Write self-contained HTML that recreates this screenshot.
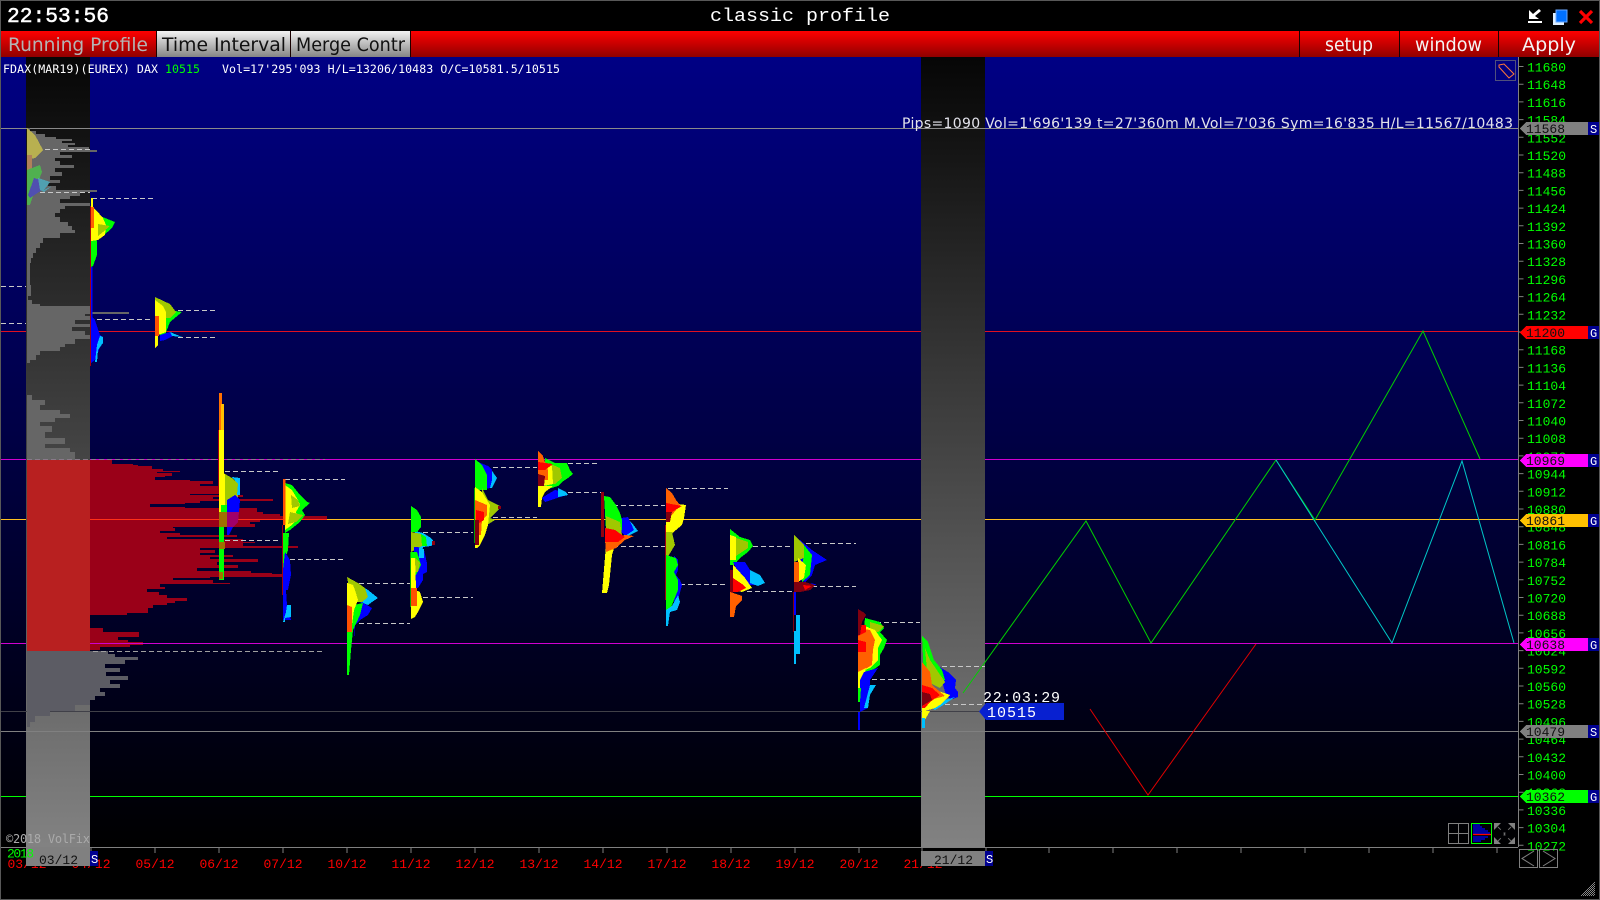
<!DOCTYPE html>
<html><head><meta charset="utf-8"><title>classic profile</title>
<style>html,body{margin:0;padding:0;background:#000;width:1600px;height:900px;overflow:hidden}svg{display:block}
.m{font-family:"Liberation Mono",monospace}
.d{font-family:"DejaVu Sans Mono","Liberation Mono",monospace}
.s{font-family:"DejaVu Sans","Liberation Sans",sans-serif}
.ax text{font-family:"Liberation Mono",monospace;font-size:13px;fill:#00ff00}
.tm text{font-family:"Liberation Mono",monospace;font-size:13px;fill:#ff0000;text-anchor:middle}
.tab{font-family:"DejaVu Sans","Liberation Sans",sans-serif;font-size:19px}
.p polygon{shape-rendering:crispEdges}
.dash path{stroke:#c8c8c8;stroke-dasharray:5 3;fill:none;stroke-width:1;shape-rendering:crispEdges}
</style></head><body>
<svg width="1600" height="900" viewBox="0 0 1600 900" xmlns="http://www.w3.org/2000/svg">
<defs>
<linearGradient id="bg" x1="0" y1="0" x2="0" y2="1"><stop offset="0" stop-color="#000084"/><stop offset="1" stop-color="#000000"/></linearGradient>
<linearGradient id="col" x1="0" y1="0" x2="0" y2="1"><stop offset="0" stop-color="#060606"/><stop offset="1" stop-color="#828282"/></linearGradient>
<linearGradient id="red" x1="0" y1="0" x2="0" y2="1"><stop offset="0" stop-color="#ff0000"/><stop offset="1" stop-color="#900000"/></linearGradient>
<linearGradient id="tabg" x1="0" y1="0" x2="0" y2="1"><stop offset="0" stop-color="#f2f2f2"/><stop offset="1" stop-color="#858585"/></linearGradient>
<pattern id="ck" width="2" height="2" patternUnits="userSpaceOnUse"><rect width="1" height="1" fill="#888"/><rect x="1" y="1" width="1" height="1" fill="#888"/></pattern>
</defs>
<rect width="1600" height="900" fill="#000"/>
<!-- chart background -->
<rect x="1" y="57" width="1517" height="790" fill="url(#bg)"/>

<!-- horizontal levels -->
<g shape-rendering="crispEdges">
<rect x="1" y="331" width="1517" height="1" fill="#e01020"/>
<rect x="1" y="459" width="1517" height="1" fill="#d000d0"/>
<rect x="1" y="519" width="1517" height="1" fill="#ffc020"/>
<rect x="1" y="643" width="1517" height="1" fill="#d000d0"/>
<rect x="1" y="796" width="1517" height="1" fill="#00ff00"/>
</g>

<!-- day columns -->
<rect x="26" y="57" width="64" height="790" fill="url(#col)"/>
<rect x="921" y="57" width="64" height="790" fill="url(#col)"/>
<rect x="1" y="128" width="1517" height="1" fill="#8a8a8a"/>
<rect x="1" y="711" width="978" height="1" fill="#404048"/>
<rect x="1" y="731" width="1517" height="1" fill="#808080"/>

<!-- composite profile -->
<path fill="#666" shape-rendering="crispEdges" d="M27 128H30V131H36V134H45V137H56V139H72V141H62V143H75V145H68V147H89V150H97V152H60V155H72V158H55V161H60V165H74V168H55V172H62V176H50V180H60V183H48V186H56V190H97V192H80V196H70V199H60V203H90V206H65V209H60V213H55V217H60V222H68V226H72V230H75V233H60V238H43V243H40V248H36V253H33V258H31V263H30V285H31V296H28V300H32V304H40V306H90V312H129V314H85V316H90V320H75V324H90V327H72V331H85V335H90V337H97V339H75V344H65V347H60V351H40V355H36V360H30V363H27V395H32V400H45V405H40V410H60V414H70V418H55V422H40V426H52V432H45V438H65V444H45V448H70V452H75V460H27Z"/>
<rect x="27" y="460" width="63" height="191" fill="#b82020" shape-rendering="crispEdges"/>
<path fill="#9a0018" shape-rendering="crispEdges" d="M90 460H112V464H133V465H138V466H152V469H163V471H180V472H157V473H172V476H165V477H155V480H190V481H213V484H200V486H230V490H222V492H238V494H190V495H243V497H213V499H273V501H200V503H185V504H150V507H185V508H257V512H263V514H280V516H327V520H260V522H250V524H255V527H173V528H175V531H160V533H180V535H237V537H167V539H243V542H255V543H243V546H298V548H200V550H215V553H200V555H233V557H210V559H258V562H217V565H238V568H197V571H251V573H272V574H289V577H210V578H173V580H213V583H230V584H160V587H165V589H147V592H159V595H167V598H187V601H175V603H167V605H153V608H148V613H127V615H90V628H103V632H139V637H118V640H128V642H143V645H130V647H100V650H90Z"/>
<path fill="#ff3018" d="M90 519H327V520H90Z" shape-rendering="crispEdges"/>
<path fill="#d000d0" d="M90 643H143V644H90Z" shape-rendering="crispEdges"/>
<path fill="#5c5c64" shape-rendering="crispEdges" d="M27 651H108V654H115V657H138V660H125V664H105V668H120V672H106V676H128V680H110V684H120V688H100V692H105V696H95V700H90V705H75V711H50V716H35V722H30V727H27Z"/>

<!-- trend lines -->
<g fill="none" stroke-width="1">
<polyline stroke="#00d000" points="963,693 1086,521 1151,643 1276,460 1315,520 1423,331 1480,459"/>
<polyline stroke="#00c8c8" points="1276,460 1392,643 1462,461 1514,643"/>
<polyline stroke="#e00000" points="1090,709 1148,795 1256,644"/>
</g>

<!-- dashed value lines -->
<path d="M27 459.5H325" stroke="#8a7a8a" stroke-dasharray="5 3" fill="none" shape-rendering="crispEdges"/>
<g class="dash">
<path d="M45 149.5H90M40 192.5H90M92 198.5H153M1 286.5H26M1 323.5H26M97 319.5H152M178 310.5H217M178 337.5H217"/>
<path d="M225 471.5H281M285 479.5H345M225 540.5H281M290 559.5H345M359 583.5H410M359 623.5H410"/>
<path d="M423 532.5H473M423 597.5H473M493 467.5H537M493 517.5H537M568 463.5H600M568 492.5H602M613 505.5H665M613 546.5H665M668 488.5H728M680 584.5H728"/>
<path d="M753 546.5H792M747 591.5H792M806 543.5H856M812 586.5H856M876 622.5H920M872 679.5H920M942 666.5H985M945 704.5H985"/>
</g>
<path d="M93 651.5H325" stroke="#a0a0a0" stroke-dasharray="5 3" fill="none" shape-rendering="crispEdges"/>

<!-- day profiles -->
<g class="p">
<!-- 03/12 muted -->
<polygon fill="#b8b050" points="27,128 35,135 43,150 35,158 27,160"/>
<polygon fill="#b0805a" points="27,155 32,155 32,168 27,170"/>
<polygon fill="#50b050" points="27,170 40,165 42,172 35,190 30,205 27,205"/>
<polygon fill="#5050b0" points="34,178 40,180 42,190 30,198 28,195"/>
<polygon fill="#50a0b0" points="38,178 50,182 44,190 52,186 44,192 40,190"/>
<!-- 04/12 -->
<rect x="91" y="198" width="2" height="9" fill="#ff0"/>
<polygon fill="#0f0" points="100,216 115,222 112,228 103,236 96,241 91,241 91,240 100,230"/>
<polygon fill="#ff0" points="91,206 96,210 103,218 106,225 105,235 98,240 91,241"/>
<polygon fill="#a0c800" points="98,224 110,226 103,232 98,236"/>
<polygon fill="#ff6000" points="91,207 94,207 94,228 91,228"/>
<polygon fill="#0f0" points="91,241 97,241 97,255 93,266 91,267"/>
<rect x="91" y="267" width="1.5" height="55" fill="#0000ff"/>
<polygon fill="#0000ff" points="92,317 95,320 100,335 103,337 99,350 95,360 91,363 91,317"/>
<polygon fill="#00c0ff" points="100,336 103,337 103,343 98,350 97,362 95,362 97,345"/>
<rect x="90" y="206" width="1" height="160" fill="#a00010"/>
<!-- 05/12 -->
<polygon fill="#0f0" points="168,310 182,312 170,322 165,335 160,338 160,320"/>
<polygon fill="#a0c800" points="155,297 170,304 176,312 170,318 160,318 155,305"/>
<polygon fill="#ff0" points="155,300 163,306 166,312 166,332 158,335 158,345 155,348"/>
<polygon fill="#ff5000" points="155,316 159,316 159,336 155,336"/>
<polygon fill="#0000ff" points="160,335 170,332 175,335 165,340 160,341"/>
<polygon fill="#00c0ff" points="170,332 182,337 172,336"/>
<!-- 06/12 -->
<rect x="219" y="393" width="3" height="41" fill="#ff7000"/>
<rect x="219" y="430" width="5" height="45" fill="#ff0"/>
<rect x="221" y="404" width="3" height="26" fill="#ffc000"/>
<rect x="218" y="430" width="1" height="60" fill="#a00010"/>
<polygon fill="#ff0" points="219,470 225,474 225,512 219,512"/>
<polygon fill="#a0c800" points="225,474 232,478 238,484 238,500 228,508 225,508"/>
<polygon fill="#00c0ff" points="232,477 240,478 240,495 237,495 238,484"/>
<polygon fill="#0000ff" points="227,500 235,495 240,500 239,512 227,512"/>
<polygon fill="#0f0" points="221,505 227,505 227,512 221,512"/>
<rect x="219" y="512" width="8" height="15" fill="#a07000"/>
<polygon fill="#a0006a" points="227,512 239,512 238,522 233,527 227,527"/>
<polygon fill="#0000ff" points="227,527 233,527 229,535 227,535"/>
<rect x="219" y="527" width="5" height="53" fill="#0f0"/>
<rect x="219" y="542" width="6" height="7" fill="#a07000"/>
<rect x="219" y="572" width="4" height="7" fill="#a07000"/>
<!-- 07/12 -->
<polygon fill="#0f0" points="285,483 292,485 300,495 307,502 310,503 302,510 305,515 300,522 290,530 285,533"/>
<polygon fill="#ff0" points="285,485 292,490 298,500 300,505 296,512 298,518 292,525 285,530"/>
<polygon fill="#a0c800" points="291,495 298,500 300,506 292,508"/>
<polygon fill="#a0c800" points="290,512 303,515 296,522 288,524"/>
<rect x="283" y="479" width="2.5" height="46" fill="#ff5000"/>
<polygon fill="#0f0" points="283,533 289,533 288,550 285,560 285,575 283,580"/>
<polygon fill="#0000ff" points="285,552 290,560 291,575 288,590 286,590 287,605 291,620 283,620 283,570"/>
<polygon fill="#00c0ff" points="287,605 291,605 291,617 285,618 285,622 283,622 286,612"/>
<rect x="282" y="525" width="1" height="70" fill="#a00010"/>
<!-- 10/12 -->
<polygon fill="#00c0ff" points="360,585 368,590 378,598 372,602 368,605 360,602"/>
<polygon fill="#0000ff" points="362,602 372,608 368,615 360,620 355,625 354,640 354,610"/>
<polygon fill="#0f0" points="354,605 363,603 360,615 353,630 351,650 349,675 347,675 347,625"/>
<polygon fill="#a0c800" points="347,577 358,583 365,588 368,597 362,602 352,602"/>
<polygon fill="#ff0" points="347,583 353,585 355,590 358,600 354,610 352,625 347,625"/>
<polygon fill="#ff5000" points="347,605 352,607 352,632 347,632"/>
<!-- 11/12 -->
<polygon fill="#00c0ff" points="415,531 423,533 431,538 435,543 431,546 423,547 421,556 415,556"/>
<rect x="432" y="541" width="3" height="4" fill="#900010"/>
<polygon fill="#0f0" points="421,534 426,537 427,546 421,546"/>
<polygon fill="#a0c800" points="411,532 421,534 422,546 411,552"/>
<polygon fill="#0f0" points="411,506 414,508 417,510 421,517 421,527 417,532 411,532"/>
<polygon fill="#0000ff" points="414,547 418,547 424,550 427,563 427,572 423,574 423,580 418,588 414,588"/>
<polygon fill="#00c0ff" points="419,548 424,549 424,558 419,558"/>
<polygon fill="#0f0" points="411,552 417,552 421,565 416,575 411,575"/>
<polygon fill="#a0c800" points="415,558 420,563 418,572 415,572"/>
<polygon fill="#ff0" points="411,558 415,558 416,588 411,588"/>
<polygon fill="#ff0" points="411,588 420,592 423,602 418,612 415,617 411,619"/>
<polygon fill="#ff5000" points="411,588 417,588 417,606 411,606"/>
<rect x="410" y="552" width="1" height="55" fill="#00a000"/>
<!-- 12/12 -->
<polygon fill="#00c0ff" points="490,468 497,478 492,488 488,488"/>
<polygon fill="#0000ff" points="478,462 488,466 492,470 492,480 490,488 482,490"/>
<polygon fill="#0f0" points="475,459 482,465 487,475 487,490 475,490"/>
<polygon fill="#a0c800" points="482,488 488,500 500,506 500,508 490,518 495,520 487,525 483,532"/>
<polygon fill="#ff0" points="475,487 482,492 490,505 488,525 485,535 480,545 477,548 475,548"/>
<polygon fill="#ff6000" points="475,500 487,505 487,515 482,520 481,535 475,535"/>
<polygon fill="#ff0000" points="476,510 484,512 484,520 476,525"/>
<polygon fill="#800010" points="475,520 479,520 479,545 475,545"/>
<rect x="498" y="506" width="3" height="3" fill="#900010"/>
<rect x="474" y="488" width="1" height="55" fill="#00a000"/>
<!-- 13/12 -->
<polygon fill="#0f0" points="545,458 555,463 567,463 570,470 573,474 568,478 562,482 558,486 545,490"/>
<polygon fill="#a0c800" points="548,463 560,468 562,478 555,484 548,484"/>
<polygon fill="#ff0" points="543,462 552,466 553,484 543,486"/>
<polygon fill="#ff6000" points="538,451 543,456 545,462 548,470 548,480 538,480"/>
<polygon fill="#ff0000" points="538,462 553,464 545,470 538,470"/>
<polygon fill="#800010" points="538,474 545,476 544,486 538,486"/>
<polygon fill="#0000ff" points="542,498 548,494 555,490 566,492 568,495 560,497 545,502"/>
<polygon fill="#00c0ff" points="558,488 566,492 568,495 558,497"/>
<polygon fill="#ff0" points="538,486 553,486 545,492 542,498 541,507 538,507"/>
<!-- 14/12 -->
<rect x="601" y="492" width="3" height="45" fill="#900010"/>
<polygon fill="#00c0ff" points="628,520 632,523 638,531 632,534 624,538"/>
<polygon fill="#0000ff" points="621,518 628,517 634,530 625,536 621,532"/>
<polygon fill="#0f0" points="604,496 610,497 616,505 620,513 622,520 622,530 606,530"/>
<polygon fill="#a0c800" points="606,516 620,522 622,535 606,540"/>
<polygon fill="#ff0" points="606,545 615,545 612,555 610,575 609,585 607,593 602,593"/>
<polygon fill="#ff6000" points="605,540 625,535 634,536 625,540 616,548 606,552"/>
<polygon fill="#f00" points="605,528 615,530 625,537 618,542 605,542"/>
<!-- 17/12 -->
<polygon fill="#ff0" points="670,503 686,505 684,518 682,525 670,535 666,535 666,518"/>
<polygon fill="#ff6000" points="666,488 672,493 676,500 680,505 672,515 666,515"/>
<polygon fill="#f00" points="666,503 682,506 672,512 666,512"/>
<polygon fill="#800010" points="666,512 672,512 670,522 666,522"/>
<polygon fill="#a0c800" points="666,532 672,532 675,545 666,560"/>
<polygon fill="#0000ff" points="674,556 678,560 678,570 676,575 680,580 682,585 678,600 674,610"/>
<polygon fill="#0f0" points="666,555 676,558 678,565 674,572 678,580 678,590 670,610 666,610"/>
<polygon fill="#00c0ff" points="678,595 680,602 677,610 670,612 668,626 666,626 666,610 672,606"/>
<rect x="665" y="525" width="1" height="75" fill="#a00010"/>
<!-- 18/12 -->
<polygon fill="#0f0" points="730,529 740,537 750,540 753,546 748,552 740,558 734,565 730,565"/>
<polygon fill="#a0c800" points="736,538 748,542 748,548 736,556"/>
<polygon fill="#ff0" points="730,535 736,537 736,560 730,560"/>
<polygon fill="#0000ff" points="733,562 745,562 750,570 760,577 755,585 745,585"/>
<polygon fill="#00c0ff" points="750,570 760,575 765,583 758,586 750,583"/>
<polygon fill="#ff0" points="733,565 736,568 745,578 752,588 742,592 733,590"/>
<polygon fill="#f00" points="733,578 742,584 746,588 738,592 733,592"/>
<polygon fill="#800010" points="730,570 733,570 733,595 730,595"/>
<polygon fill="#ff6000" points="730,592 742,596 742,600 736,606 734,617 730,617"/>
<!-- 19/12 -->
<polygon fill="#0000ff" points="800,540 812,550 827,560 815,565 812,575 805,582 800,580"/>
<polygon fill="#0f0" points="804,545 812,555 810,575 802,582"/>
<polygon fill="#a0c800" points="794,535 804,545 804,558 794,562"/>
<polygon fill="#ff0" points="798,558 806,565 804,578 798,582"/>
<polygon fill="#ff6000" points="794,562 799,562 799,582 794,582"/>
<polygon fill="#0000ff" points="805,583 816,584 810,590 805,590"/>
<polygon fill="#800010" points="794,582 805,582 815,585 810,590 800,592 794,592"/>
<polygon fill="#f00" points="803,585 812,586 805,590"/>
<rect x="794" y="592" width="2" height="23" fill="#0000ff"/>
<polygon fill="#00c0ff" points="796,615 800,615 800,631 796,631"/>
<polygon fill="#00c0ff" points="794,631 800,631 800,654 796,654 796,664 794,664"/>
<rect x="793" y="592" width="1" height="40" fill="#800010"/>
<!-- 20/12 -->
<polygon fill="#0f0" points="865,618 880,622 884,628 880,632 887,640 884,648 880,655 880,665 870,672 860,672"/>
<polygon fill="#a0c800" points="870,622 884,626 878,632 870,632"/>
<polygon fill="#ff0" points="862,625 875,630 882,640 878,648 878,660 870,668 860,672"/>
<polygon fill="#ff6000" points="858,628 870,630 875,640 873,650 872,665 860,672 858,672"/>
<polygon fill="#f00" points="858,640 866,642 866,652 858,652"/>
<polygon fill="#f00" points="860,625 866,625 866,632 858,636"/>
<polygon fill="#800010" points="858,609 863,612 866,615 862,622 860,635 858,635"/>
<polygon fill="#ff0" points="858,672 866,668 864,680 862,688 858,690"/>
<polygon fill="#0000ff" points="864,672 878,668 870,680 870,695 868,708 860,712 860,680"/>
<polygon fill="#00c0ff" points="870,685 876,685 870,695 868,708 864,708"/>
<polygon fill="#0f0" points="858,688 861,688 860,702 858,702"/>
<rect x="858" y="712" width="2" height="18" fill="#0000ff"/>
<!-- 21/12 -->
<polygon fill="#0000ff" points="938,666 948,672 956,680 955,688 958,692 958,697 950,700 945,692"/>
<polygon fill="#0f0" points="922,636 928,642 934,660 942,670 945,680 940,682 924,680"/>
<polygon fill="#a0c800" points="925,648 930,660 945,682 940,688 928,682"/>
<polygon fill="#00c0ff" points="945,700 955,697 945,704 935,710 932,708"/>
<polygon fill="#ff0" points="924,685 935,690 950,695 945,700 940,705 935,708 925,711 922,711"/>
<polygon fill="#ff6000" points="922,662 930,672 932,685 945,696 930,700 922,695"/>
<polygon fill="#f00" points="922,685 932,688 940,695 930,702 925,708 922,708"/>
<polygon fill="#800010" points="922,692 930,694 932,700 922,706"/>
<polygon fill="#ff0" points="922,711 930,711 926,718 924,720 922,720"/>
<polygon fill="#00c0ff" points="922,718 925,718 925,728 922,728"/>
</g>

<!-- top bar -->
<rect x="0" y="0" width="1600" height="31" fill="#000"/>
<text class="m" x="7" y="22" font-size="21" fill="#fff" stroke="#fff" stroke-width=".5" textLength="102" lengthAdjust="spacingAndGlyphs">22:53:56</text>
<text class="m" x="710" y="21" font-size="18" fill="#fff" textLength="180" lengthAdjust="spacingAndGlyphs">classic profile</text>
<!-- window icons -->
<polygon fill="#fff" points="1529,10 1533,14 1539,9 1541,11 1535,16 1539,19 1529,19"/>
<rect x="1528" y="21" width="14" height="2" fill="#fff"/>
<rect x="1553" y="13" width="11" height="12" fill="#dfefff"/>
<rect x="1556" y="10" width="11" height="12" fill="#0070ff" stroke="#6aa8ff" stroke-width="1"/>
<path d="M1580 11L1592 23M1592 11L1580 23" stroke="#ff0000" stroke-width="3.2" fill="none"/>

<!-- red toolbar -->
<rect x="0" y="31" width="1600" height="26" fill="url(#red)"/>
<rect x="157" y="31" width="133" height="26" fill="url(#tabg)"/>
<rect x="291" y="31" width="119" height="26" fill="url(#tabg)"/>
<g fill="#1a0000" shape-rendering="crispEdges">
<rect x="156" y="31" width="1" height="26"/><rect x="290" y="31" width="1" height="26"/><rect x="410" y="31" width="1" height="26"/>
<rect x="1299" y="31" width="1" height="26"/><rect x="1399" y="31" width="1" height="26"/><rect x="1498" y="31" width="1" height="26"/>
</g>
<text class="tab" x="8" y="51" fill="#b4b4b4" textLength="140" lengthAdjust="spacingAndGlyphs">Running Profile</text>
<text class="tab" x="162" y="51" fill="#111" textLength="124" lengthAdjust="spacingAndGlyphs">Time Interval</text>
<text class="tab" x="296" y="51" fill="#111" textLength="109" lengthAdjust="spacingAndGlyphs">Merge Contr</text>
<text class="tab" x="1325" y="51" fill="#f4f4f4" textLength="48" lengthAdjust="spacingAndGlyphs">setup</text>
<text class="tab" x="1415" y="51" fill="#f4f4f4" textLength="67" lengthAdjust="spacingAndGlyphs">window</text>
<text class="tab" x="1522" y="51" fill="#f4f4f4" textLength="54" lengthAdjust="spacingAndGlyphs">Apply</text>

<!-- info text -->
<text class="d" x="3" y="73" font-size="11.6" fill="#fff" textLength="155">FDAX(MAR19)(EUREX) DAX</text>
<text class="d" x="165" y="73" font-size="11.6" fill="#00ff00" textLength="35">10515</text>
<text class="d" x="222" y="73" font-size="11.6" fill="#fff" textLength="338">Vol=17'295'093 H/L=13206/10483 O/C=10581.5/10515</text>
<text class="s" x="902" y="128" font-size="14" fill="#e4e4ec" textLength="611">Pips=1090 Vol=1'696'139 t=27'360m M.Vol=7'036 Sym=16'835 H/L=11567/10483</text>

<!-- tag icon -->
<rect x="1495.5" y="60.5" width="20" height="20" fill="none" stroke="#50507c"/>
<path d="M1499 65L1504 64L1514 74L1509 78L1499 67Z" fill="none" stroke="#ff7838"/>

<!-- axis -->
<rect x="1518" y="57" width="1" height="790" fill="#808080"/>
<rect x="0" y="847" width="1518" height="1" fill="#808080"/>
<path d="M1521 66V847" stroke="#808080" stroke-width="5" stroke-dasharray="1 16.7" fill="none"/>
<g class="ax">
<text x="1527" y="71.5">11680</text><text x="1527" y="89.2">11648</text><text x="1527" y="106.9">11616</text><text x="1527" y="124.6">11584</text><text x="1527" y="142.3">11552</text><text x="1527" y="160">11520</text><text x="1527" y="177.7">11488</text><text x="1527" y="195.4">11456</text><text x="1527" y="213.1">11424</text><text x="1527" y="230.8">11392</text><text x="1527" y="248.5">11360</text><text x="1527" y="266.2">11328</text><text x="1527" y="283.9">11296</text><text x="1527" y="301.6">11264</text><text x="1527" y="319.3">11232</text><text x="1527" y="337">11200</text><text x="1527" y="354.7">11168</text><text x="1527" y="372.4">11136</text><text x="1527" y="390.1">11104</text><text x="1527" y="407.8">11072</text><text x="1527" y="425.5">11040</text><text x="1527" y="443.2">11008</text><text x="1527" y="460.9">10976</text><text x="1527" y="478.6">10944</text><text x="1527" y="496.3">10912</text><text x="1527" y="514">10880</text><text x="1527" y="531.7">10848</text><text x="1527" y="549.4">10816</text><text x="1527" y="567.1">10784</text><text x="1527" y="584.8">10752</text><text x="1527" y="602.5">10720</text><text x="1527" y="620.2">10688</text><text x="1527" y="637.9">10656</text><text x="1527" y="655.6">10624</text><text x="1527" y="673.3">10592</text><text x="1527" y="691">10560</text><text x="1527" y="708.7">10528</text><text x="1527" y="726.4">10496</text><text x="1527" y="744.1">10464</text><text x="1527" y="761.8">10432</text><text x="1527" y="779.5">10400</text><text x="1527" y="797.2">10368</text><text x="1527" y="814.9">10336</text><text x="1527" y="832.6">10304</text><text x="1527" y="850.3">10272</text>
</g>

<!-- price tags -->
<g shape-rendering="crispEdges">
<polygon fill="#808080" points="1520,128.5 1526,122 1588,122 1588,135 1526,135"/>
<polygon fill="#ff0000" points="1520,332.5 1526,326 1588,326 1588,339 1526,339"/>
<polygon fill="#ff00ff" points="1520,460.5 1526,454 1588,454 1588,467 1526,467"/>
<polygon fill="#ffc000" points="1520,520.5 1526,514 1588,514 1588,527 1526,527"/>
<polygon fill="#ff00ff" points="1520,644.5 1526,638 1588,638 1588,651 1526,651"/>
<polygon fill="#808080" points="1520,731.5 1526,725 1588,725 1588,738 1526,738"/>
<polygon fill="#00ff00" points="1520,796.5 1526,790 1588,790 1588,803 1526,803"/>
<rect x="1588" y="122" width="11" height="13" fill="#000090"/><rect x="1588" y="326" width="11" height="13" fill="#000090"/><rect x="1588" y="454" width="11" height="13" fill="#000090"/><rect x="1588" y="514" width="11" height="13" fill="#000090"/><rect x="1588" y="638" width="11" height="13" fill="#000090"/><rect x="1588" y="725" width="11" height="13" fill="#000090"/><rect x="1588" y="790" width="11" height="13" fill="#000090"/>
</g>
<g class="m" font-size="13" fill="#111">
<text x="1526" y="133">11568</text><text x="1526" y="337">11200</text><text x="1526" y="465">10969</text><text x="1526" y="525">10861</text><text x="1526" y="649">10638</text><text x="1526" y="736">10479</text><text x="1526" y="801">10362</text>
</g>
<g class="m" font-size="12" fill="#fff">
<text x="1590" y="133">S</text><text x="1590" y="337">G</text><text x="1590" y="465">G</text><text x="1590" y="525">G</text><text x="1590" y="649">G</text><text x="1590" y="736">S</text><text x="1590" y="801">G</text>
</g>

<!-- last price -->
<text class="m" x="983" y="702" font-size="15" fill="#fff" textLength="77">22:03:29</text>
<polygon fill="#0820d0" points="979,711.5 986,703 1064,703 1064,720 986,720"/>
<text class="m" x="987" y="717" font-size="15" fill="#fff" textLength="49">10515</text>

<!-- time axis -->
<path d="M91 847v6M155 847v6M219 847v6M283 847v6M347 847v6M411 847v6M475 847v6M539 847v6M603 847v6M667 847v6M731 847v6M795 847v6M859 847v6M922 847v6M986 847v6M1049 847v6M1113 847v6M1177 847v6M1241 847v6M1305 847v6M1369 847v6M1433 847v6M1497 847v6" stroke="#808080" stroke-width="1" fill="none"/>
<g class="tm">
<text x="27" y="868">03/12</text><text x="91" y="868">04/12</text><text x="155" y="868">05/12</text><text x="219" y="868">06/12</text><text x="283" y="868">07/12</text><text x="347" y="868">10/12</text><text x="411" y="868">11/12</text><text x="475" y="868">12/12</text><text x="539" y="868">13/12</text><text x="603" y="868">14/12</text><text x="667" y="868">17/12</text><text x="731" y="868">18/12</text><text x="795" y="868">19/12</text><text x="859" y="868">20/12</text><text x="923" y="868">21/12</text>
</g>
<rect x="26" y="848" width="64" height="18" fill="#808080"/>
<rect x="90" y="851" width="8" height="15" fill="#000090"/>
<rect x="921" y="851" width="64" height="15" fill="#808080"/>
<rect x="985" y="851" width="8" height="15" fill="#000090"/>
<text class="m" x="39" y="864" font-size="13" fill="#111" textLength="39">03/12</text>
<text class="m" x="934" y="864" font-size="13" fill="#111" textLength="39">21/12</text>
<text class="m" x="91" y="863" font-size="12" fill="#fff">S</text>
<text class="m" x="986" y="863" font-size="12" fill="#fff">S</text>
<text class="m" x="7" y="857.5" font-size="13" fill="#00ff00" textLength="27">2018</text>
<text class="d" x="6" y="843" font-size="12" fill="#aaa" textLength="84">©2018 VolFix</text>

<!-- bottom right tools -->
<g fill="none" stroke="#808080">
<rect x="1448.5" y="823.5" width="20" height="20"/><path d="M1458.5 823.5V843.5M1448.5 833.5H1468.5"/>
<rect x="1471.5" y="823.5" width="20" height="20" stroke="#00ff00"/>
<path d="M1473 825H1480M1473 827H1482M1473 829H1485M1473 831H1488M1473 833H1490M1473 837H1488M1473 839H1485M1473 841H1481" stroke="#0000ff" stroke-width="1.2"/>
<path d="M1473 834.5H1491" stroke="#ff0000" stroke-width="1.2"/>
<path d="M1498 827L1505 834M1511 827L1504 834M1498 841L1505 834M1511 841L1504 834" stroke="#707070" stroke-dasharray="4 4"/>
<rect x="1519.5" y="849.5" width="18" height="18"/><rect x="1539.5" y="849.5" width="18" height="18"/>
<path d="M1534 851L1522 858.5L1534 866M1543 851L1555 858.5L1543 866"/>
</g>
<g fill="#808080"><polygon points="1494,823 1501,823 1494,830"/><polygon points="1515,823 1508,823 1515,830"/><polygon points="1494,844 1501,844 1494,837"/><polygon points="1515,844 1508,844 1515,837"/></g>
<polygon points="1580,896 1595,881 1595,896" fill="url(#ck)"/>

<!-- outer frame -->
<rect x="0.5" y="0.5" width="1599" height="899" fill="none" stroke="#585858"/>
</svg>
</body></html>
